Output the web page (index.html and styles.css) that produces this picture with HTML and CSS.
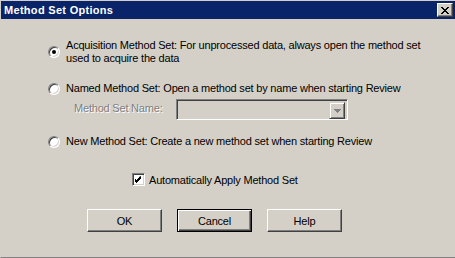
FILE: index.html
```html
<!DOCTYPE html>
<html lang="en">
<head>
  <meta charset="UTF-8" />
  <title>Method Set Options</title>
  <link rel="stylesheet" href="styles.css">
</head>
<body>

  <div class="dialog">
    <div class="titlebar">
      <span class="title">Method Set Options</span>
      <button class="close-btn" aria-label="Close">
        <svg width="8" height="7" viewBox="0 0 8 7">
          <path d="M0 0h2v1h-2zM6 0h2v1h-2zM1 1h2v1h-2zM5 1h2v1h-2zM2 2h4v1h-4zM3 3h2v1h-2zM2 4h4v1h-4zM1 5h2v1h-2zM5 5h2v1h-2zM0 6h2v1h-2zM6 6h2v1h-2z" fill="#000"/>
        </svg>
      </button>
    </div>

    <div class="content">
      <label class="option option-first">
        <span class="radio checked"></span>
        <span class="option-text">Acquisition Method Set: For unprocessed data, always open the method set<br>used to acquire the data</span>
      </label>

      <label class="option option-named">
        <span class="radio"></span>
        <span class="option-text">Named Method Set: Open a method set by name when starting Review</span>
      </label>

      <div class="name-row">
        <span class="disabled-label">Method Set Name:</span>
        <div class="combo">
          <div class="combo-btn">
            <svg width="7" height="4" viewBox="0 0 7 4">
              <path d="M0 0h7v1h-7zM1 1h5v1h-5zM2 2h3v1h-3zM3 3h1v1h-1z" fill="#808080"/>
            </svg>
          </div>
        </div>
      </div>

      <label class="option option-new">
        <span class="radio"></span>
        <span class="option-text">New Method Set: Create a new method set when starting Review</span>
      </label>

      <label class="check-row">
        <span class="checkbox">
          <svg width="7" height="7" viewBox="0 0 7 7">
            <path d="M6 0v3h-1v1h-1v1h-1v1h-1v1h-1v-1h-1v-1h-1v-3h1v1h1v1h1v-1h1v-1h1v-1z" fill="#000"/>
          </svg>
        </span>
        <span>Automatically Apply Method Set</span>
      </label>

      <div class="buttons">
        <button class="btn">OK</button>
        <button class="btn btn-default">Cancel</button>
        <button class="btn">Help</button>
      </div>
    </div>
  </div>

</body>
</html>
```

FILE: styles.css
```css
body {
  margin: 0;
  background: #d4d0c8;
  font-family: 'Liberation Sans', Arial, sans-serif;
  font-size: 11px;
  letter-spacing: -0.2px;
  color: #000;
}

.dialog {
  width: 455px;
  height: 258px;
  box-sizing: border-box;
  background: #d4d0c8;
  border-top: 1px solid #d4d0c8;
  border-left: 1px solid #d4d0c8;
  border-bottom: 1px solid #808080;
  display: flex;
  flex-direction: column;
}

.titlebar {
  height: 18px;
  background: #0a246a;
  display: flex;
  align-items: center;
  justify-content: space-between;
  padding: 0 2px 0 3px;
}

.title {
  color: #fff;
  font-family: 'Liberation Sans', Arial, sans-serif;
  font-weight: bold;
  font-size: 11px;
  letter-spacing: 0.3px;
}

.close-btn {
  width: 16px;
  height: 14px;
  padding: 0;
  margin: 0;
  background: #d4d0c8;
  border: 1px solid;
  border-color: #fff #404040 #404040 #fff;
  box-shadow: inset -1px -1px #808080;
  display: flex;
  align-items: center;
  justify-content: center;
}

.content {
  padding: 20px 0 0 47px;
}

.option {
  display: flex;
  align-items: center;
  gap: 6px;
}

.option-text {
  line-height: 13px;
}

.option-named {
  margin-top: 17px;
}

.option-new {
  margin-top: 15px;
}

.radio {
  width: 12px;
  height: 12px;
  box-sizing: border-box;
  border-radius: 50%;
  background: #fff;
  border: 1px solid;
  border-color: #808080 #fff #fff #808080;
  box-shadow: inset 1px 1px #404040, inset -1px -1px #d4d0c8;
  display: flex;
  align-items: center;
  justify-content: center;
  flex-shrink: 0;
}

.radio.checked::after {
  content: "";
  width: 4px;
  height: 4px;
  border-radius: 50%;
  background: #000;
}

.name-row {
  display: flex;
  align-items: center;
  margin-top: 4px;
  padding-left: 26px;
}

.disabled-label {
  width: 102px;
  color: #808080;
  text-shadow: 1px 1px #fff;
  margin-top: -3px;
}

.combo {
  width: 172px;
  height: 21px;
  box-sizing: border-box;
  border: 1px solid;
  border-color: #808080 #fff #fff #808080;
  box-shadow: inset 1px 1px #404040, inset -1px -1px #d4d0c8;
  background: #d4d0c8;
  display: flex;
  justify-content: flex-end;
  padding: 2px;
}

.combo-btn {
  width: 16px;
  height: 17px;
  box-sizing: border-box;
  border: 1px solid;
  border-color: #d4d0c8 #404040 #404040 #d4d0c8;
  box-shadow: inset 1px 1px #fff, inset -1px -1px #808080;
  display: flex;
  align-items: center;
  justify-content: center;
}

.check-row {
  display: flex;
  align-items: center;
  gap: 4px;
  margin-top: 25px;
  padding-left: 84px;
}

.checkbox {
  width: 13px;
  height: 13px;
  box-sizing: border-box;
  background: #fff;
  border: 1px solid;
  border-color: #808080 #fff #fff #808080;
  box-shadow: inset 1px 1px #404040, inset -1px -1px #d4d0c8;
  display: flex;
  align-items: center;
  justify-content: center;
}

.buttons {
  display: flex;
  gap: 15px;
  margin-top: 23px;
  margin-left: 39px;
}

.btn {
  width: 75px;
  height: 23px;
  box-sizing: border-box;
  padding: 0;
  font-family: 'Liberation Sans', Arial, sans-serif;
  font-size: 11px;
  letter-spacing: -0.2px;
  color: #000;
  background: #d4d0c8;
  border: 1px solid;
  border-color: #fff #404040 #404040 #fff;
  box-shadow: inset -1px -1px #808080;
}

.btn-default {
  border: 1px solid #000;
  box-shadow: inset 1px 1px #fff, inset -1px -1px #404040, inset -2px -2px #808080;
}
```
